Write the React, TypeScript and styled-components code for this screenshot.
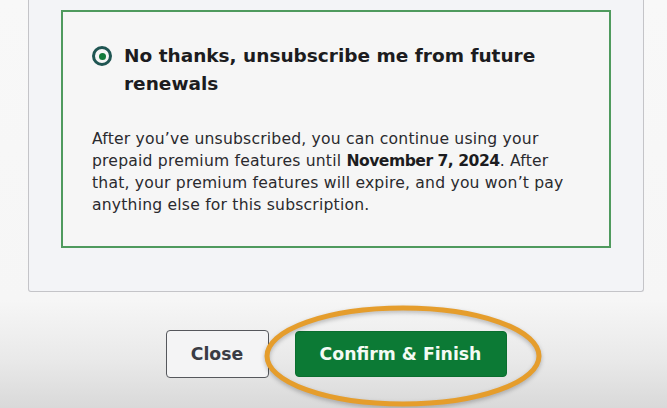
import { createGlobalStyle } from 'styled-components'
import styled from 'styled-components'

const GlobalStyle = createGlobalStyle`
  html, body {
    margin: 0;
    padding: 0;
  }
  body {
    width: 667px;
    height: 408px;
    overflow: hidden;
    font-family: 'DejaVu Sans', Verdana, sans-serif;
    color: #222;
    background: linear-gradient(180deg, #f8f8f8 0px, #f6f6f6 300px, #e9e9e9 360px, #d9d9d9 408px);
  }
`

const Page = styled.div`
  display: flex;
  flex-direction: column;
  padding: 0 23px 0 28px;
`

const Panel = styled.section`
  background: #f3f4f7;
  border: 1px solid #c4c4c8;
  border-top: none;
  border-radius: 0 0 3px 3px;
  padding: 10px 32px 43px;
`

const OptionBox = styled.div`
  background: #f6f6f6;
  border: 2px solid #4f9a5e;
  padding: 30px 24px 30px 29px;
`

const OptionRow = styled.label`
  display: flex;
  align-items: flex-start;
  gap: 12px;
`

const Radio = styled.span`
  flex: none;
  width: 14px;
  height: 14px;
  margin-top: 4px;
  border: 3px solid #1f5552;
  border-radius: 50%;
  display: flex;
  align-items: center;
  justify-content: center;
  background: #f6f6f6;

  &::after {
    content: '';
    width: 7px;
    height: 7px;
    border-radius: 50%;
    background: #137a3b;
  }
`

const OptionTitle = styled.h3`
  margin: 0;
  font-size: 18.5px;
  line-height: 28px;
  font-weight: bold;
  color: #1c1c20;
`

const Description = styled.p`
  margin: 30px 0 0;
  font-size: 15.6px;
  line-height: 22px;
  letter-spacing: 0.2px;
  color: #2a2a2e;

  strong {
    color: #1c1c20;
    letter-spacing: -0.5px;
  }
`

const ButtonRow = styled.div`
  display: flex;
  justify-content: center;
  align-items: center;
  gap: 26px;
  margin-top: 38px;
`

const Button = styled.button<{ $primary?: boolean }>`
  position: relative;
  font-family: 'DejaVu Sans', Verdana, sans-serif;
  font-size: 17.3px;
  font-weight: bold;
  border-radius: 4px;
  cursor: pointer;
  padding: 0;
  height: ${(p) => (p.$primary ? '46px' : '48px')};
  width: ${(p) => (p.$primary ? '212px' : '103px')};
  border: ${(p) => (p.$primary ? '1px solid #0a6e2e' : '1px solid #55575c')};
  background: ${(p) => (p.$primary ? '#0c7a35' : '#f4f4f5')};
  color: ${(p) => (p.$primary ? '#f4fbf4' : '#3a3c44')};
`

const Highlight = styled.div`
  position: relative;
  display: flex;
`

const Ring = styled.svg`
  position: absolute;
  left: -32px;
  top: -28px;
  width: 280px;
  height: 106px;
  overflow: visible;
  pointer-events: none;
  filter: drop-shadow(0 2px 2px rgba(0, 0, 0, 0.25));
`

export default function App() {
  return (
    <>
      <GlobalStyle />
      <Page>
        <Panel>
          <OptionBox>
            <OptionRow>
              <Radio />
              <OptionTitle>No thanks, unsubscribe me from future renewals</OptionTitle>
            </OptionRow>
            <Description>
              After you’ve unsubscribed, you can continue using your prepaid premium features
              until <strong>November 7, 2024</strong>. After that, your premium features will
              expire, and you won’t pay anything else for this subscription.
            </Description>
          </OptionBox>
        </Panel>
        <ButtonRow>
          <Button>Close</Button>
          <Highlight>
            <Button $primary>Confirm &amp; Finish</Button>
            <Ring viewBox="0 0 280 106">
              <ellipse cx="140" cy="53" rx="136" ry="48" fill="none" stroke="#e59d2c" strokeWidth="5" />
            </Ring>
          </Highlight>
        </ButtonRow>
      </Page>
    </>
  )
}
